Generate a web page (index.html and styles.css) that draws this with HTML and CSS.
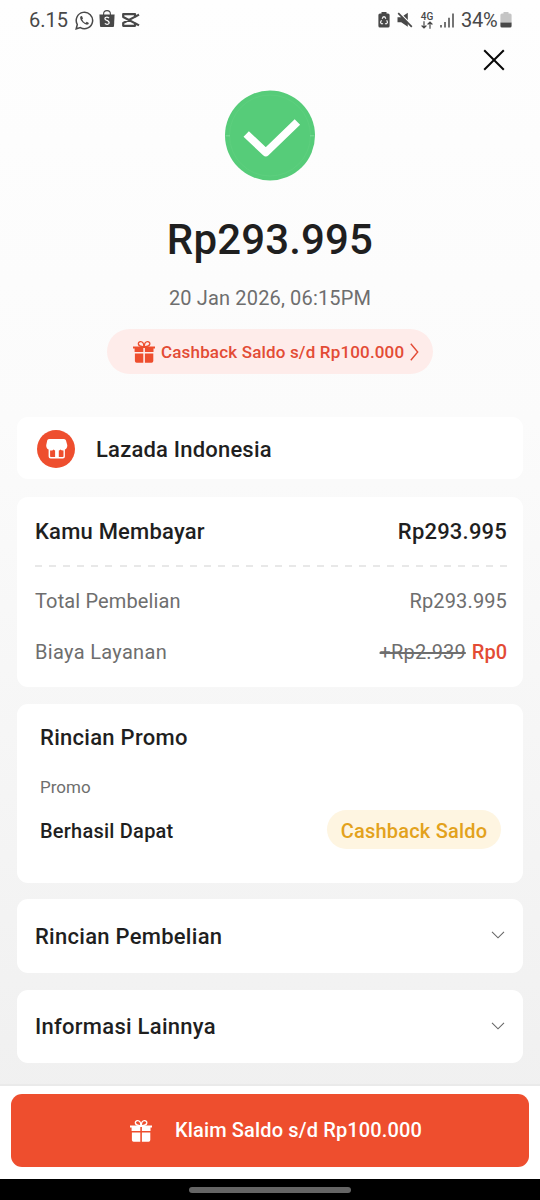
FILE: index.html
```html
<!DOCTYPE html>
<html lang="id">
<head>
<meta charset="utf-8">
<meta name="viewport" content="width=device-width, initial-scale=1">
<title>Pembayaran Berhasil</title>
<link rel="stylesheet" href="styles.css">
</head>
<body>
<svg class="defs" width="0" height="0" aria-hidden="true">
  <symbol id="gift" viewBox="0 0 24 24">
    <path d="M1 6.4H23V8.4H21.5V12.1H12.9V8H11.3V12.1H2.6V8.4H1ZM2.9 13.5H11.3V22.7H4.6Q2.9 22.7 2.9 21ZM12.9 13.5H21.3V21Q21.3 22.7 19.6 22.7H12.9Z" fill="currentColor"/>
    <path d="M11.8 6.5C5 7 5.3 1.6 8.7 1.7C11.2 1.8 11.8 4 11.8 6.5ZM12.4 6.5C12.4 4 13 1.8 15.5 1.7C18.9 1.6 19.2 7 12.4 6.5Z" fill="none" stroke="currentColor" stroke-width="1.3"/>
  </symbol>
</svg>
<div class="screen">
  <header class="status">
    <span class="clock">6.15</span>
    <svg class="whatsapp" width="19" height="19" viewBox="0 0 19 19"><path d="M1.2 17.8L2.3 13.5A8.2 8.2 0 1 1 5.4 16.6Z" fill="none" stroke="#484848" stroke-width="1.5"/><path d="M6.2 5.1Q5.2 5.4 5.1 6.8Q5.2 9 7.5 11.3Q10 13.7 12 13.7Q13.8 13.3 13.9 11.9L11.7 10.7L10.6 12Q8.2 11 7.1 8.6L8 7.4L7.1 5.2Z" fill="#484848"/></svg>
    <svg class="shop" width="16" height="18" viewBox="0 0 16 18"><path d="M4.6 5V4A3.3 3.3 0 0 1 11.4 4V5" fill="none" stroke="#484848" stroke-width="1.1"/><path d="M.4 4.6H15.6L15 16.2Q14.9 17 14 17H2Q1.1 17 1 16.2Z" fill="#484848"/><path d="M10.1 8Q8.1 6.7 6.5 7.5Q5.3 8.6 6.6 9.8L9 10.9Q10.8 12.1 9.8 13.6Q8.1 15 5.8 13.6" fill="none" stroke="#fff" stroke-width="1.2"/></svg>
    <svg class="capcut" width="19" height="16" viewBox="0 0 19 16"><path d="M18 2.6L14 4.9V2.1H2.2V5L18 13.4M18 13.4L14 11.1V13.8H2.2V11L18 2.6" fill="none" stroke="#484848" stroke-width="2.2" stroke-linejoin="round"/></svg>
    <span class="spacer"></span>
    <svg class="saver" width="12" height="16" viewBox="0 0 12 16"><path d="M3.5 0H8.5V1.4H10Q11.6 1.4 11.6 3V14Q11.6 15.5 10 15.5H2Q.4 15.5 .4 14V3Q.4 1.4 2 1.4H3.5Z" fill="#484848"/><path d="M4.1 6.8L5.2 4.9H6.8L7.9 6.8M8.7 8.3L9.5 10.2L8.7 11.8H6.9M5.1 11.8H3.3L2.5 10.2L3.5 8.3" fill="none" stroke="#fff" stroke-width="1.1"/></svg>
    <svg class="mute" width="16" height="16" viewBox="0 0 16 16"><path d="M.5 5.3H4.2L10.8 .8V14.8L4.2 10.3H.5Z" fill="#484848"/><path d="M2.2 .4L15.8 14" stroke="#fbfbfb" stroke-width="1.5"/><path d="M1.2 1.2L14.8 14.8" stroke="#484848" stroke-width="1.7"/></svg>
    <span class="network"><span class="gen">4G</span><svg width="12" height="8" viewBox="0 0 12 8"><path d="M3 .2V6.8M.6 4.5L3 6.9L5.4 4.5M9 7.8V1.2M6.6 3.5L9 1.1L11.4 3.5" fill="none" stroke="#484848" stroke-width="1.2"/></svg></span>
    <svg class="signal" width="14" height="15" viewBox="0 0 14 15"><path d="M1 12V14.5M5 9V14.5M9 4.8V14.5M13 .5V14.5" stroke="#484848" stroke-width="1.5"/></svg>
    <span class="percent">34%</span>
    <svg class="battery" width="12" height="16" viewBox="0 0 12 16"><path d="M3.5 0H8.5V1.4H10Q11.6 1.4 11.6 3V10.4H.4V3Q.4 1.4 2 1.4H3.5Z" fill="#c5c5c5"/><path d="M.4 10.4H11.6V14Q11.6 15.5 10 15.5H2Q.4 15.5 .4 14Z" fill="#484848"/></svg>
  </header>
  <div class="toolbar">
    <svg width="22" height="22" viewBox="0 0 22 22" aria-label="Tutup"><path d="M1.2 1.2L20.8 20.8M20.8 1.2L1.2 20.8" stroke="#080808" stroke-width="2"/></svg>
  </div>
  <section class="summary">
    <svg class="success" width="90" height="90" viewBox="0 0 90 90"><circle cx="45" cy="44.5" r="45" fill="#56cc79"/><circle cx="45" cy="44.5" r="40.5" fill="none" stroke="#60d080" stroke-width=".7"/><path d="M.5 44.8H5M85 44.8H89.5" stroke="#83dc9e" stroke-width=".9"/><path d="M21.2 43L40.8 61.5L72.4 31" fill="none" stroke="#fff" stroke-width="7.8" stroke-linejoin="round"/></svg>
    <h1 class="amount">Rp293.995</h1>
    <p class="date">20 Jan 2026, 06:15PM</p>
    <div class="cashback">
      <svg class="gift" width="24" height="24"><use href="#gift"/></svg>
      <span class="cashback-text">Cashback Saldo s/d Rp100.000</span>
      <svg class="next" width="9" height="18" viewBox="0 0 9 18"><path d="M.8 .8L7.7 9L.8 17.2" fill="none" stroke="#e34b35" stroke-width="1.4"/></svg>
    </div>
  </section>
  <main class="cards">
    <section class="card merchant">
      <svg width="38" height="38" viewBox="0 0 38 38"><circle cx="19" cy="19" r="19" fill="#ee4e2e"/><path d="M12 9H27Q28.6 9 29 10.5L30.3 15.3Q30.3 18.8 27.9 19.5V26.5Q27.9 28.5 25.9 28.5H13.6Q11.6 28.5 11.6 26.5V19.5Q9.2 18.8 9.2 15.3L10.2 10.5Q10.5 9 12 9Z" fill="#fff"/><path d="M13.1 20.6Q15.5 20.6 16.8 19.4Q17.5 20.5 18.1 20.6V27H13.8Q13.1 27 13.1 26.3ZM21.8 20.6Q22.8 20.3 23.3 19.4Q24.5 20.6 26.5 20.5V26.3Q26.5 27 25.8 27H21.8Z" fill="#ee4e2e"/></svg>
      <span class="heading merchant-name">Lazada Indonesia</span>
    </section>
    <section class="card payment">
      <div class="row total"><span class="heading paid-label">Kamu Membayar</span><span class="heading paid-value">Rp293.995</span></div>
      <div class="divider"></div>
      <div class="row detail"><span class="purchase">Total Pembelian</span><span class="price">Rp293.995</span></div>
      <div class="row detail"><span class="fee">Biaya Layanan</span><span class="fees"><s>+Rp2.939</s><span class="free">Rp0</span></span></div>
    </section>
    <section class="card promo">
      <h2 class="heading promo-title">Rincian Promo</h2>
      <p class="promo-label">Promo</p>
      <div class="row promo-row"><span class="earned">Berhasil Dapat</span><span class="badge">Cashback Saldo</span></div>
    </section>
    <section class="card fold">
      <span class="heading">Rincian Pembelian</span>
      <svg width="14" height="8" viewBox="0 0 14 8"><path d="M1 .8L7 6.8L13 .8" fill="none" stroke="#666" stroke-width="1.1"/></svg>
    </section>
    <section class="card fold">
      <span class="heading">Informasi Lainnya</span>
      <svg width="14" height="8" viewBox="0 0 14 8"><path d="M1 .8L7 6.8L13 .8" fill="none" stroke="#666" stroke-width="1.1"/></svg>
    </section>
  </main>
  <footer class="actions">
    <button class="claim"><svg class="gift" width="24" height="24"><use href="#gift"/></svg><span class="claim-text">Klaim Saldo s/d Rp100.000</span></button>
  </footer>
  <div class="navigation"><span class="handle"></span></div>
</div>
</body>
</html>
```
FILE: styles.css
```css
* { box-sizing: border-box; }
body { margin: 0; font-family: Roboto, "Liberation Sans", sans-serif; color: #1f1f1f; }
h1, h2, p { margin: 0; }
svg { display: block; flex: none; }
span, s { white-space: nowrap; }
.defs { position: absolute; }
.screen { width: 540px; height: 1200px; display: flex; flex-direction: column; overflow: hidden; background: linear-gradient(#fefefe 0, #fbfbfb 35%, #f0f0f0 92%); }

.status { height: 40px; display: flex; align-items: center; padding: 0 28px 0 29px; color: #484848; }
.clock { width: 46px; font-size: 20px; letter-spacing: 0; }
.shop { margin: -2px 0 0 5px; }
.capcut { margin-left: 6px; }
.spacer { flex: 1; }
.mute { margin-left: 7px; }
.network { display: flex; flex-direction: column; align-items: center; width: 14px; margin-left: 7px; }
.gen { font-size: 10px; line-height: 9px; font-weight: 500; }
.signal { margin: 0 7px 0 6px; }
.percent { font-size: 20px; width: 38px; letter-spacing: -.3px; }
.battery { margin-left: 1px; }

.toolbar { height: 51px; padding: 9px 35px 0 0; display: flex; justify-content: flex-end; }
.success { overflow: visible; }
.summary { height: 326px; display: flex; flex-direction: column; align-items: center; }
.amount { margin-top: 34px; font-size: 42px; line-height: 50px; font-weight: 500; letter-spacing: .15px; }
.date { margin-top: 21px; font-size: 20px; line-height: 24px; letter-spacing: .15px; color: #6e6e6e; }
.cashback { width: 326px; height: 45px; margin-top: 19px; padding: 0 14px 0 25px; display: flex; align-items: center; border-radius: 23px; background: #feecea; color: #e34b35; }
.cashback .gift { color: #ee4e2e; }
.cashback-text { margin-left: 5px; font-size: 17px; font-weight: 500; letter-spacing: .17px; }
.next { margin-left: auto; }

.cards { padding: 0 17px; }
.card { background: #fff; border-radius: 11px; margin-bottom: 17px; }
.heading { font-size: 22px; line-height: 28px; font-weight: 500; letter-spacing: .2px; }
.row { display: flex; align-items: center; justify-content: space-between; }
.merchant { height: 62px; margin-bottom: 18px; padding: 1px 20px 0; display: flex; align-items: center; gap: 21px; }
.merchant-name { padding-top: 2px; }
.payment { height: 190px; padding: 21px 16px 0 18px; }
.divider { height: 2px; margin: 19px 0 21px; background: repeating-linear-gradient(90deg, #e8e8e8 0 7px, transparent 7px 14.1px); }
.detail { height: 26px; font-size: 20px; letter-spacing: .13px; color: #6e6e6e; }
.detail + .detail { margin-top: 25px; }
.fee { letter-spacing: .32px; }
.fees { display: flex; gap: 6px; }
.fees s { text-decoration-thickness: 1.5px; }
.free { color: #e34b35; font-weight: 500; letter-spacing: 0; }
.promo { height: 179px; padding: 20px 22px 0 23px; margin-bottom: 16px; }
.promo-title { letter-spacing: .28px; }
.promo-label { margin-top: 24px; font-size: 17px; line-height: 22px; color: #6e6e6e; }
.promo-row { height: 39px; margin-top: 12px; }
.earned { padding-top: 2px; font-size: 20px; font-weight: 500; letter-spacing: .23px; }
.badge { width: 174px; height: 39px; padding-top: 2px; display: flex; align-items: center; justify-content: center; border-radius: 20px; background: #fef5e1; color: #e3a21c; font-size: 20px; font-weight: 500; letter-spacing: .2px; }
.fold { height: 74px; display: flex; align-items: center; justify-content: space-between; padding: 1px 18px 0; }
.fold .heading { letter-spacing: .27px; }
.fold svg { margin-bottom: 3px; }
.fold:last-child { margin-bottom: 0; height: 73px; }

.actions { height: 95px; margin-top: auto; padding: 8px 11px 0; background: #fff; border-top: 2px solid #eaeaea; }
.claim { width: 518px; height: 73px; padding: 0 0 0 118px; display: flex; align-items: center; gap: 22px; border: 0; border-radius: 11px; background: #ee4e2e; color: #fff; font-family: inherit; font-size: 20px; font-weight: 500; }
.claim-text { padding-bottom: 2px; letter-spacing: .14px; }
.navigation { height: 21px; display: flex; justify-content: center; align-items: center; background: #000; }
.handle { width: 162px; height: 6px; border-radius: 3px; background: #666; }
```
